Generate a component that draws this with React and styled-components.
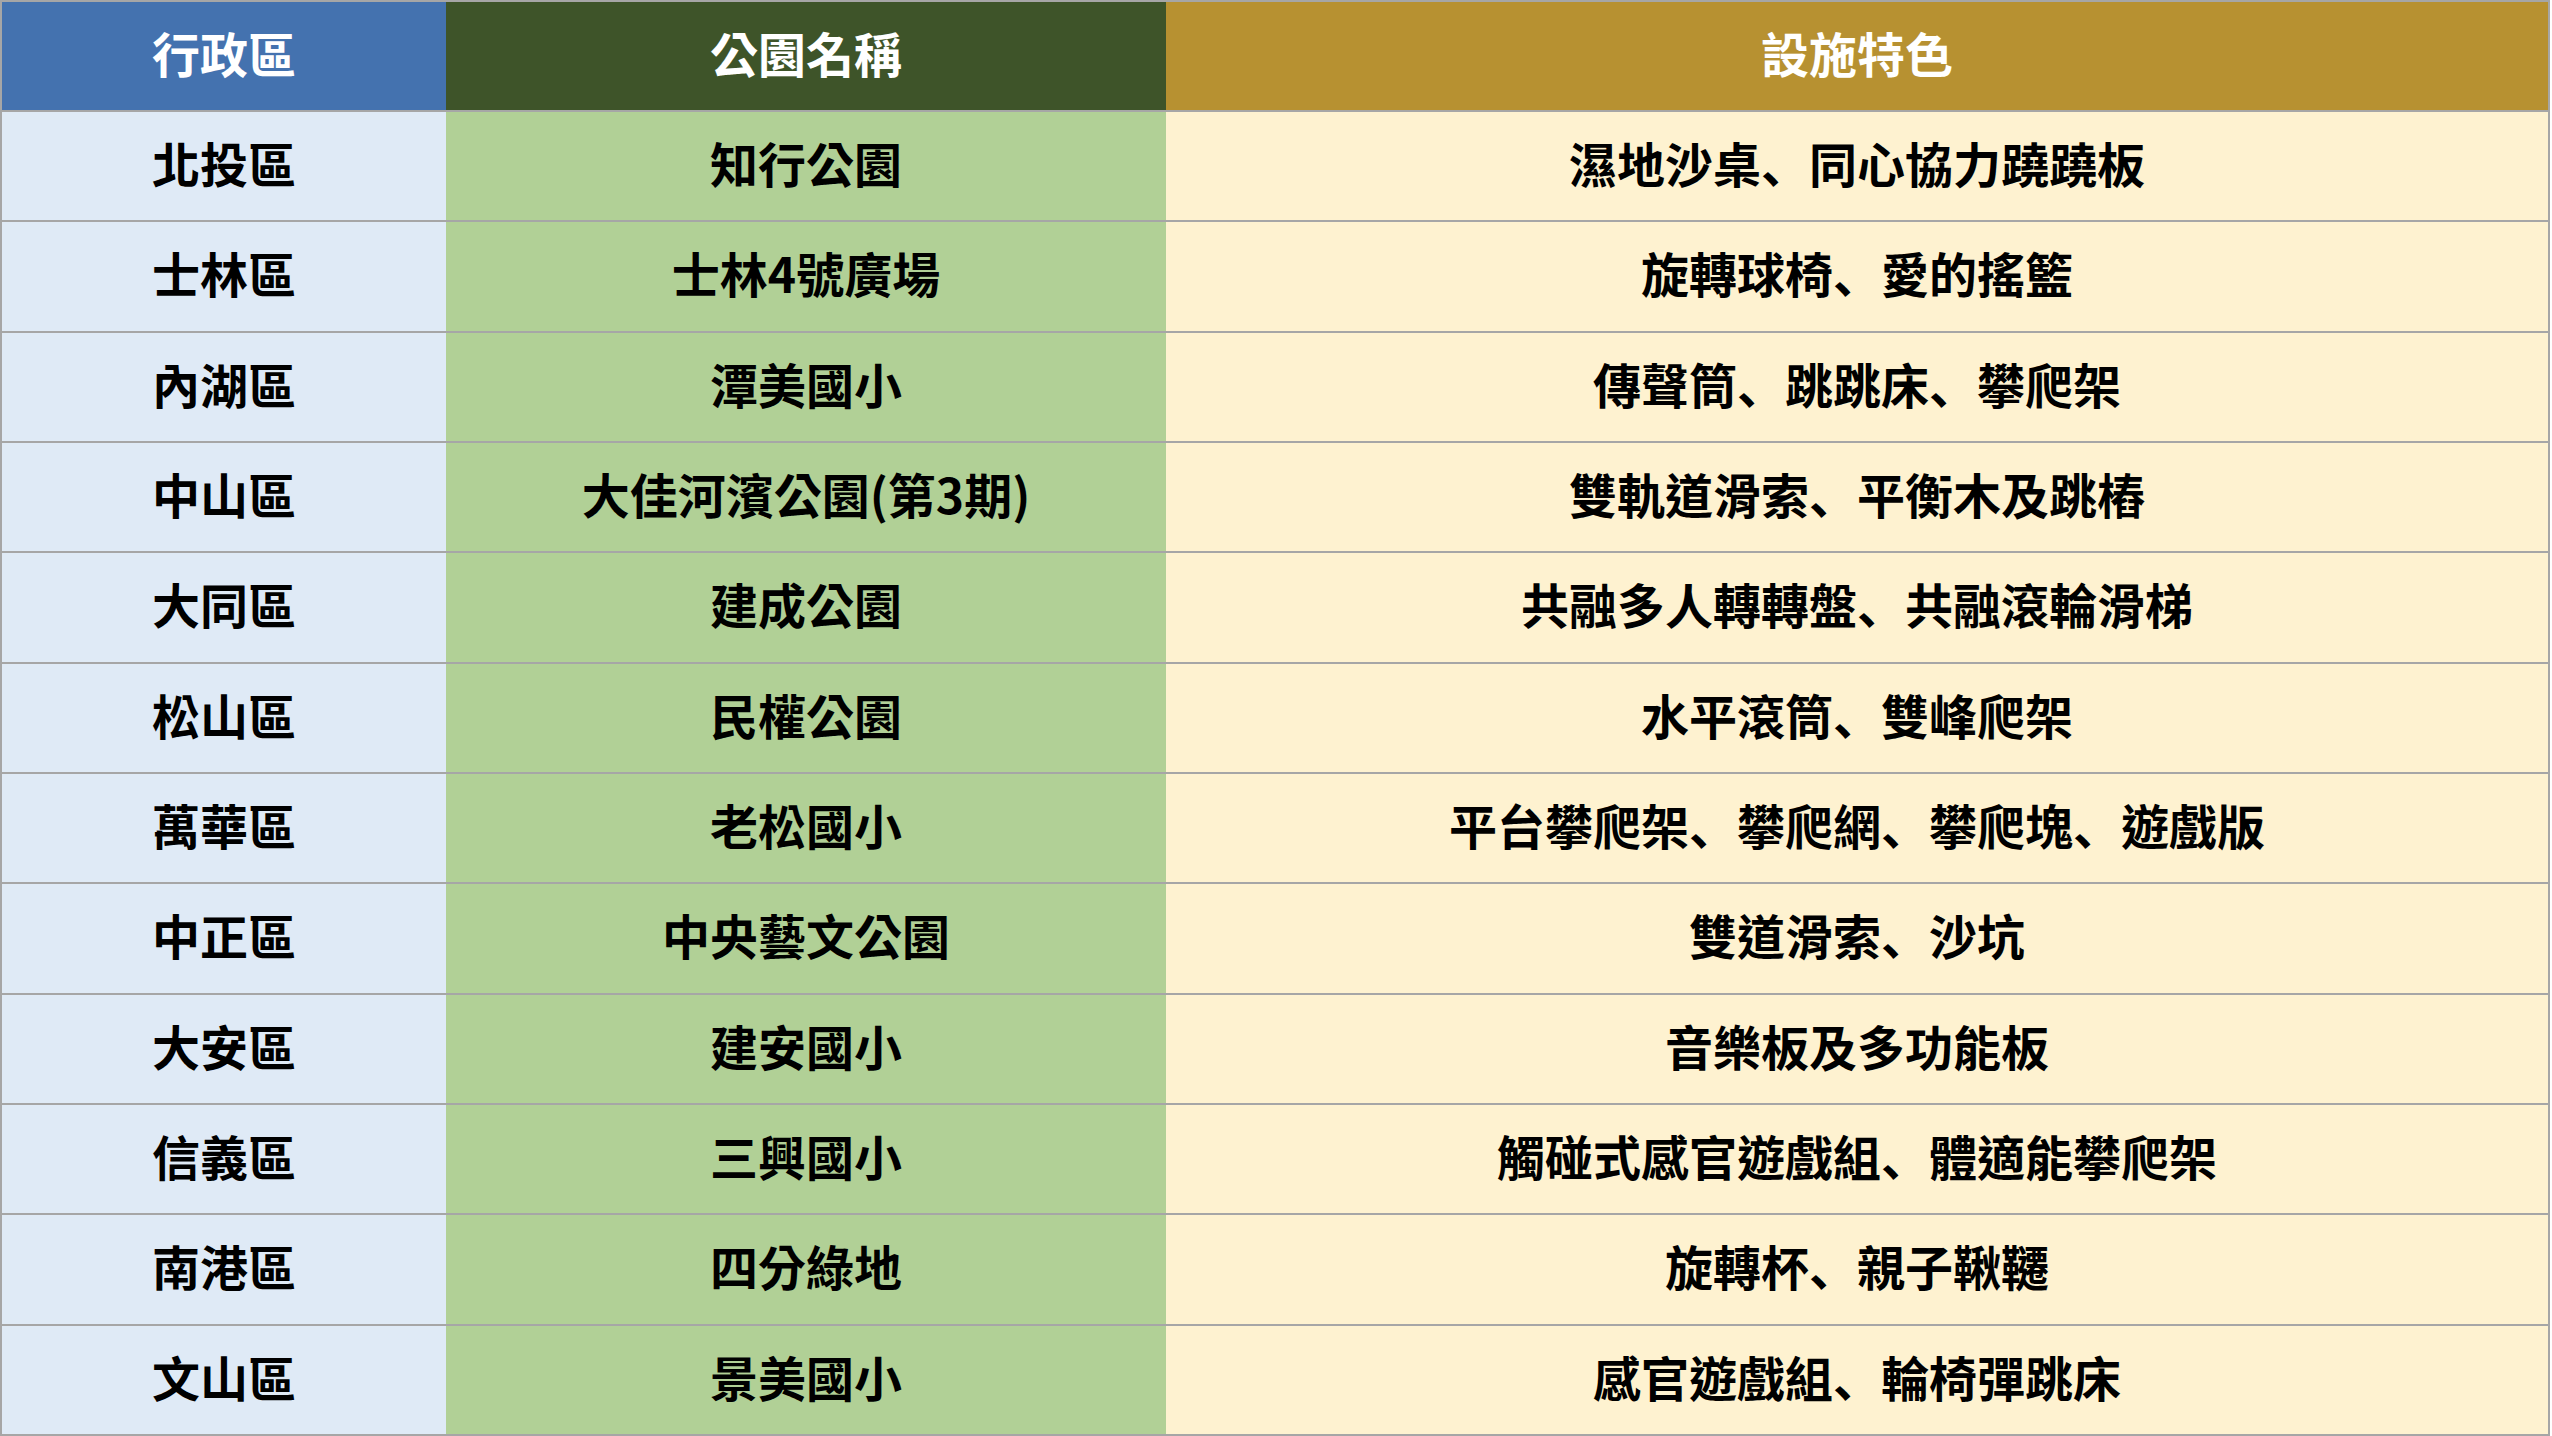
import styled, { createGlobalStyle } from 'styled-components';

const GlobalStyle = createGlobalStyle`
  html, body {
    margin: 0;
    padding: 0;
    background: #ffffff;
  }
  body {
    font-family: "Noto Sans CJK TC", "Noto Sans", sans-serif;
  }
`;

const rows = [
  ['北投區', '知行公園', '濕地沙桌、同心協力蹺蹺板'],
  ['士林區', '士林4號廣場', '旋轉球椅、愛的搖籃'],
  ['內湖區', '潭美國小', '傳聲筒、跳跳床、攀爬架'],
  ['中山區', '大佳河濱公園(第3期)', '雙軌道滑索、平衡木及跳樁'],
  ['大同區', '建成公園', '共融多人轉轉盤、共融滾輪滑梯'],
  ['松山區', '民權公園', '水平滾筒、雙峰爬架'],
  ['萬華區', '老松國小', '平台攀爬架、攀爬網、攀爬塊、遊戲版'],
  ['中正區', '中央藝文公園', '雙道滑索、沙坑'],
  ['大安區', '建安國小', '音樂板及多功能板'],
  ['信義區', '三興國小', '觸碰式感官遊戲組、體適能攀爬架'],
  ['南港區', '四分綠地', '旋轉杯、親子鞦韆'],
  ['文山區', '景美國小', '感官遊戲組、輪椅彈跳床'],
];

const headColors = ['#4472af', '#3e5429', '#b79131'];
const bodyColors = ['#dfeaf6', '#b1d096', '#fef2d0'];

// the ideographic comma sits low-left in the original font
function withCommas(text) {
  const parts = text.split('、');
  return parts.map((p, i) => (
    <span key={i}>
      {p}
      {i < parts.length - 1 && <Comma>、</Comma>}
    </span>
  ));
}

export default function App() {
  return (
    <>
      <GlobalStyle />
      <Table>
        <colgroup>
          <col style={{ width: 445 }} />
          <col style={{ width: 720 }} />
          <col />
        </colgroup>
        <thead>
          <tr>
            <HeadCell $bg={headColors[0]}>行政區</HeadCell>
            <HeadCell $bg={headColors[1]}>公園名稱</HeadCell>
            <HeadCell $bg={headColors[2]}>設施特色</HeadCell>
          </tr>
        </thead>
        <tbody>
          {rows.map((r) => (
            <tr key={r[0]}>
              {r.map((text, i) => (
                <Cell key={i} $bg={bodyColors[i]}>
                  {withCommas(text)}
                </Cell>
              ))}
            </tr>
          ))}
        </tbody>
      </Table>
    </>
  );
}

const Table = styled.table`
  width: 2550px;
  height: 1436px;
  border-collapse: collapse;
  table-layout: fixed;
  border: 2px solid #a6a6a6;
`;

const HeadCell = styled.th`
  background-color: ${(p) => p.$bg};
  color: #ffffff;
  font-size: 48px;
  font-weight: 700;
  text-align: center;
  vertical-align: middle;
  padding: 0 0 8px;
  height: 100px;
  border-bottom: 2px solid #a6a6a6;
  line-height: 1;
`;

const Cell = styled.td`
  background-color: ${(p) => p.$bg};
  color: #000000;
  font-size: 48px;
  font-weight: 700;
  text-align: center;
  vertical-align: middle;
  padding: 0 0 8px;
  height: 100px;
  border-bottom: 2px solid #a6a6a6;
  line-height: 1;
  white-space: nowrap;
`;

const Comma = styled.span`
  font-family: "Noto Sans CJK JP", "Noto Sans CJK TC", sans-serif;
`;
